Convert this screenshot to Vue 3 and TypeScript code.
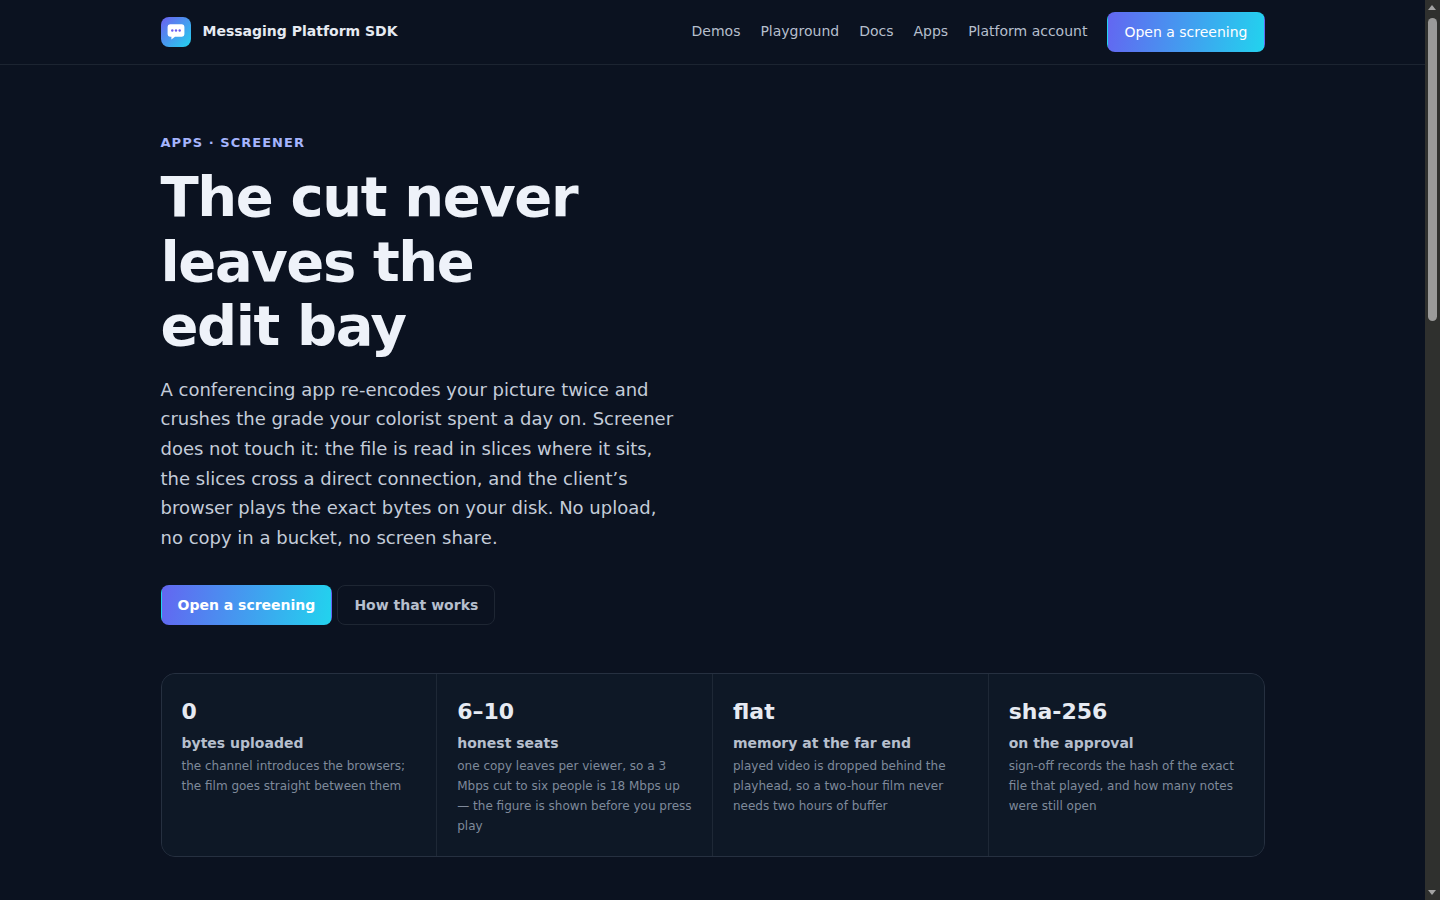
<script setup lang="ts">
interface Stat { value: string; label: string; note: string }
const links: string[] = ['Demos', 'Playground', 'Docs', 'Apps', 'Platform account']
const stats: Stat[] = [
  { value: '0', label: 'bytes uploaded', note: 'the channel introduces the browsers; the film goes straight between them' },
  { value: '6–10', label: 'honest seats', note: 'one copy leaves per viewer, so a 3 Mbps cut to six people is 18 Mbps up — the figure is shown before you press play' },
  { value: 'flat', label: 'memory at the far end', note: 'played video is dropped behind the playhead, so a two-hour film never needs two hours of buffer' },
  { value: 'sha-256', label: 'on the approval', note: 'sign-off records the hash of the exact file that played, and how many notes were still open' },
]
</script>

<template>
  <div class="page">
    <header class="topbar">
      <div class="topbar-inner">
        <a class="brand" href="#">
          <span class="logo">
            <svg width="20" height="20" viewBox="0 0 20 20" aria-hidden="true">
              <path d="M4 2.2h12a2.6 2.6 0 0 1 2.4 2.6v7.4a2.6 2.6 0 0 1-2.4 2.6H9l-3.6 2.8v-2.8H4a2.6 2.6 0 0 1-2.4-2.6V4.800a2.600 2.600 0 0 1 2.400-2.600z" fill="#fff" />
              <circle cx="6.300" cy="8.500" r="1.200" fill="#6a5cf0" />
              <circle cx="10" cy="8.500" r="1.200" fill="#6a5cf0" />
              <circle cx="13.700" cy="8.500" r="1.200" fill="#6a5cf0" />
            </svg>
          </span>
          <span class="brand-name">Messaging Platform SDK</span>
        </a>
        <nav class="nav">
          <a v-for="l in links" :key="l" href="#" class="nav-link">{{ l }}</a>
          <a href="#" class="btn btn-primary btn-nav">Open a screening</a>
        </nav>
      </div>
    </header>

    <main class="main">
      <p class="eyebrow">APPS · SCREENER</p>
      <h1 class="title">The cut never leaves the edit&nbsp;bay</h1>
      <p class="lede">A conferencing app re-encodes your picture twice and crushes the grade your colorist spent a day on. Screener does not touch it: the file is read in slices where it sits, the slices cross a direct connection, and the client’s browser plays the exact bytes on your disk. No upload, no copy in a bucket, no screen share.</p>
      <div class="actions">
        <a href="#" class="btn btn-primary btn-strong">Open a screening</a>
        <a href="#" class="btn btn-ghost">How that works</a>
      </div>
      <section class="stats">
        <div v-for="s in stats" :key="s.label" class="stat">
          <div class="stat-value">{{ s.value }}</div>
          <div class="stat-label">{{ s.label }}</div>
          <div class="stat-note">{{ s.note }}</div>
        </div>
      </section>
    </main>

    <div class="scrollbar" aria-hidden="true">
      <span class="arrow arrow-up"></span>
      <span class="thumb"></span>
      <span class="arrow arrow-down"></span>
    </div>
  </div>
</template>

<style>
html { background: #0b1220; }
body { margin: 0; background: #0b1220; }
</style>

<style scoped>
.page {
  box-sizing: border-box;
  padding-right: 15px;
  padding-bottom: 43px;
  background: #0b1220;
  color: #e6eaf2;
  font-family: "DejaVu Sans", sans-serif;
}
a { text-decoration: none; color: inherit; }
.topbar { border-bottom: 1px solid #1c2431; height: 64px; }
.topbar-inner {
  width: 1104px;
  height: 64px;
  margin: 0 auto;
  display: flex;
  align-items: center;
  justify-content: space-between;
}
.brand { display: flex; align-items: center; gap: 12px; }
.logo {
  width: 30px;
  height: 30px;
  border-radius: 8px;
  background: linear-gradient(135deg, #6d5ff0, #22d3ee);
  display: flex;
  align-items: center;
  justify-content: center;
}
.brand-name { font-size: 14px; line-height: 16px; margin-top: -2px; font-weight: 700; color: #e6eaf2; }
.nav { display: flex; align-items: center; gap: 20px; font-size: 14px; color: #b6bfcd; }
.nav-link { line-height: 16px; margin-top: -2px; }
.btn {
  display: inline-flex;
  align-items: center;
  justify-content: center;
  height: 40px;
  box-sizing: border-box;
  padding: 0 16px;
  border: 1px solid transparent;
  border-radius: 8px;
  font-size: 14px;
}
.btn-primary { background: linear-gradient(100deg, #6366f1, #22d3ee); color: #fff; }
.btn-nav { font-weight: 400; }
.btn-strong { font-weight: 700; }
.btn-ghost { border-color: #1e2633; color: #b6bfcd; font-weight: 700; }
.main { width: 1104px; margin: 0 auto; padding-top: 70px; }
.eyebrow {
  margin: 0 0 14.3px;
  font-size: 13px;
  line-height: 16px;
  font-weight: 700;
  letter-spacing: 1.04px;
  color: #a5b4fc;
}
.title {
  margin: 0;
  width: 520px;
  font-size: 56px;
  line-height: 64.4px;
  letter-spacing: -0.025em;
  font-weight: 700;
  color: #eef2f9;
}
.lede {
  margin: 16.3px 0 0;
  width: 520px;
  font-size: 18px;
  line-height: 29.6px;
  color: #c4ccd9;
}
.actions { display: flex; gap: 5px; margin-top: 32.4px; }
.stats {
  margin-top: 48px;
  display: grid;
  grid-template-columns: repeat(4, 1fr);
  gap: 1px;
  background: #1e2836;
  border: 1px solid #263040;
  border-radius: 14px;
  overflow: hidden;
}
.stat { padding: 23px 20px 20px; background: #0e1826; }
.stat-value { font-size: 22px; line-height: 30px; font-weight: 700; color: #e6eaf2; }
.stat-label { margin-top: 6px; font-size: 14px; line-height: 20px; font-weight: 700; color: #b6bfcd; }
.stat-note { margin-top: 3px; font-size: 12px; line-height: 20px; color: #7f8a9b; }

.scrollbar {
  position: fixed;
  top: 0;
  right: 0;
  bottom: 0;
  width: 15px;
  background: #2f302e;
}
.thumb {
  position: absolute;
  left: 3px;
  top: 18px;
  width: 9px;
  height: 303px;
  border-radius: 5px;
  background: #9a9a9a;
}
.arrow {
  position: absolute;
  left: 3px;
  width: 0;
  height: 0;
  border-left: 4.5px solid transparent;
  border-right: 4.5px solid transparent;
}
.arrow-up { top: 5px; border-bottom: 5px solid #a3a3a3; }
.arrow-down { bottom: 5px; border-top: 5px solid #a3a3a3; }
</style>
